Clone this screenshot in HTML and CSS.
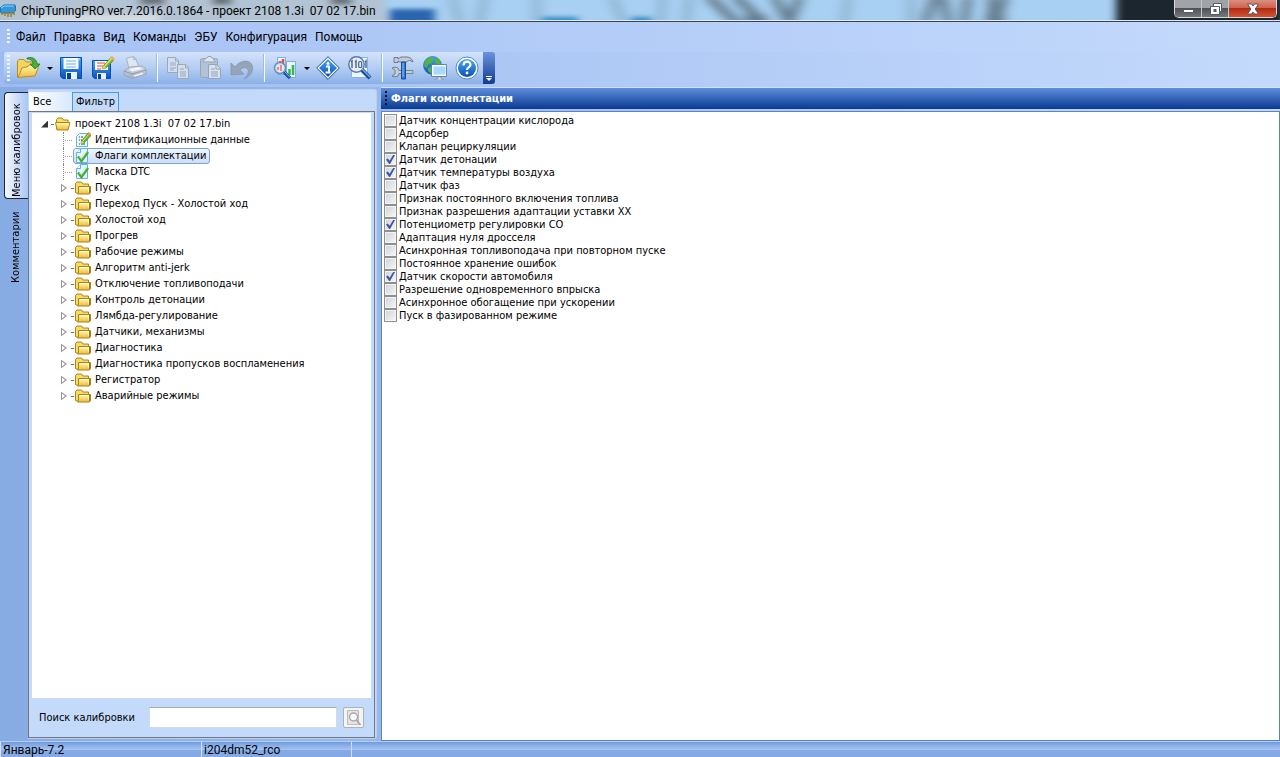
FILE: index.html
```html
<!DOCTYPE html>
<html lang="ru">
<head>
<meta charset="utf-8">
<title>ChipTuningPRO</title>
<link rel="stylesheet" href="styles.css">
</head>
<body>
<svg class="defs" aria-hidden="true">
  <defs>
    <linearGradient id="gold" x1="0" y1="0" x2="0" y2="1"><stop offset="0" stop-color="#fffab8"/><stop offset="1" stop-color="#eebb35"/></linearGradient>
    <linearGradient id="blue" x1="0" y1="0" x2="0" y2="1"><stop offset="0" stop-color="#4ba6ef"/><stop offset="1" stop-color="#0a50bc"/></linearGradient>
    <linearGradient id="grey" x1="0" y1="0" x2="0" y2="1"><stop offset="0" stop-color="#d8e0ea"/><stop offset="1" stop-color="#a3afbf"/></linearGradient>
    <symbol id="folder" viewBox="0 0 16 16">
      <path d="M.5 12.5v-9L2 2h4.500l1.500 2h5.500v9H2z" fill="#f6dc62" stroke="#a8821a"/>
      <path d="M3.500 6.500h12v6l-1 1.500h-12l1-1.500z" fill="url(#gold)" stroke="#a8821a"/>
      <path d="M4.500 7.500h9v4" fill="none" stroke="#fff9c8"/><path d="M14.500 7v6" stroke="#9a7413"/>
    </symbol>
    <symbol id="folder-open" viewBox="0 0 16 16">
      <path d="M1.500 13V3.500L3 2h4l1.500 2H13v9z" fill="#f8df69" stroke="#ab861c"/>
      <path d="M.5 6.500h14.500l-2 7.500H2z" fill="url(#gold)" stroke="#ab861c"/>
    </symbol>
    <symbol id="check" viewBox="0 0 16 16">
      <path d="M5.500.5h7v14h-11v-10z" fill="#e4f4ff" stroke="#63b3e6"/><path d="M1.500 4.500h4v-4" fill="#fff" stroke="#63b3e6"/>
      <path d="M3 8.500l3.500 4.500L13 4" fill="none" stroke="#43a832" stroke-width="2.500"/><path d="M3.500 8.500l3 3L12 4" fill="none" stroke="#8ade65" stroke-width=".8"/>
    </symbol>
    <symbol id="ident" viewBox="0 0 16 16">
      <path d="M4.500 1.500h8v13h-11v-10z" fill="#eef8ff" stroke="#63b3e6"/>
      <path d="M4 5h1m1 0h2M4 8h1m1 0h1M4 12h1m1 0h4" stroke="#245"/>
      <path d="M6 12l1-3.500L13 1l3 2.500L9 11z" fill="#68bc30" stroke="#45801f" stroke-width=".7"/><path d="M12 2l1.500-2L16 2l-1 2z" fill="#e78745"/><path d="M6 12l1-3.500L9 11z" fill="#f3ce65"/><path d="M8 9l5.500-6.500" stroke="#f0df52"/>
    </symbol>
    <symbol id="open" viewBox="0 0 24 24">
      <path d="M1.500 21V5L3 3.500h5L10 6h8v5L5 20z" fill="#f5d45b" stroke="#bd8c21"/>
      <path d="M2 21.500L6 12l6-1.500 1-1.500 10 .5-4 10.500z" fill="url(#gold)" stroke="#bd8c21"/>
      <path d="M11 2c6-2 10 2 10 6h3l-5 5-5-5h3c0-3-2-5-6-5z" fill="#48ae3c" stroke="#217b25" stroke-width=".8"/>
    </symbol>
    <symbol id="save" viewBox="0 0 24 24">
      <path d="M1.500 1.500h21v21H3.500l-2-2z" fill="url(#blue)" stroke="#0752ad"/><path d="M4.500 2h15v11h-15z" fill="#f7fbff"/>
      <path d="M7 5h10M7 8h10M7 11h10" stroke="#70aee5"/><path d="M7 16h11v7H7z" fill="#eaf2fc"/><path d="M8 17h4v6H8z" fill="#064299"/><path d="M20 3h1" stroke="#fff"/>
    </symbol>
    <symbol id="save-as" viewBox="0 0 24 24">
      <path d="M1.500 4.500h18v18H3.500l-2-2z" fill="url(#blue)" stroke="#0752ad"/><path d="M4 5h13v9H4z" fill="#f7fbff"/>
      <path d="M6 7h8m-8 3h6m-6 3h4" stroke="#e54c32"/><path d="M6 17h9v6H6z" fill="#eaf2fc"/><path d="M7 18h3v5H7z" fill="#064299"/>
      <path d="M11 13l2-4L20 1.500 23 4l-8 8z" fill="#78bd32" stroke="#4c8224" stroke-width=".7"/><path d="M19 2l2-2 3 3-2 2z" fill="#e7aa51"/><path d="M11 13l2-4 2 3z" fill="#f5d05d"/><path d="M14 9.500l6.500-7" stroke="#f4e15c" stroke-width="1.300"/>
    </symbol>
    <symbol id="print" viewBox="0 0 24 24">
      <path d="M6 13L3.500 2l7-1.500L13 3l3 9z" fill="#dfe7f1" stroke="#a7b4c4"/><path d="M10.500.5L11 4l2-1" stroke="#a7b4c4" fill="none"/>
      <path d="M1 15l6-4 12-1 4 3v5L9 22.500 1 19z" fill="url(#grey)" stroke="#9aa8b8"/><path d="M1 15l8 3 14-4" fill="none" stroke="#8c9aac"/><path d="M6 13l10-2 3 2-10 2.500z" fill="#f2f6fa"/><path d="M11 20l9-2.500" stroke="#eef3f8" stroke-width="1.500"/>
    </symbol>
    <symbol id="copy" viewBox="0 0 24 24" fill="#d3ddeb" stroke="#98a9bf">
      <path d="M1.500 1.500h8l3 3v12h-11z"/><path d="M9.500 2v3h3M4 7h6m-6 2h6m-6 3h6m-6 2h4" fill="none"/>
      <path d="M11.500 8.500h8l3 3v11h-11z"/><path d="M19.500 9v3h3M14 13h4m-4 3h6m-6 2h6m-6 2h6" fill="none"/>
    </symbol>
    <symbol id="paste" viewBox="0 0 24 24" fill="#b4c2d4" stroke="#94a4b9">
      <rect x="2.500" y="2.500" width="17" height="19" rx="2"/><path d="M6 4l2-2h1l1-1.500h3L14 2h1l2 4H5z" fill="#dde4ed"/>
      <path d="M10.500 8.500h8l4 4v10h-12z" fill="#d8e2ef"/><path d="M18 9v4h4M13 13h4m-4 3h7m-7 2h7m-7 2h7" fill="none"/>
    </symbol>
    <symbol id="undo" viewBox="0 0 24 24"><path d="M1 7v12l13-1-4-4c3-3 7-3 8 0s-1 6-4 9c7-3 10-8 8-14-2-5-11-6-17 2z" fill="#94a4b9" stroke="#8293aa" stroke-width=".7"/></symbol>
    <symbol id="charts" viewBox="0 0 24 24">
      <path d="M4.500 1.500h8v17h-8zM13.500 5.500h9v16h-9z" fill="#edf6ff" stroke="#79aee8"/><path d="M7 9V5m3 4V3" stroke="#f04438" stroke-width="2.500"/><path d="M16.500 19v-6m3.500 6V9" stroke="#34b842" stroke-width="2.500"/>
      <circle cx="7" cy="12" r="5.500" fill="#dceafa" fill-opacity=".88" stroke="#6d8fb5" stroke-width="1.500"/><path d="M5 14v-3m3 4V9" stroke="#ef8a82" stroke-width="2"/><path d="M11 16l6 6" stroke="#205baa" stroke-width="3.500"/><path d="M11 15l6 6" stroke="#72aaf0"/>
    </symbol>
    <symbol id="info" viewBox="0 0 24 24">
      <path d="M12 .7L23.300 12 12 23.300.7 12z" fill="#fff" stroke="#174a91"/><path d="M12 3l9 9-9 9-9-9z" fill="url(#blue)"/><circle cx="12" cy="7.500" r="1.500" fill="#fff"/><path d="M10 10.500h3v6M9.500 16.500h5" fill="none" stroke="#fff" stroke-width="1.800"/>
    </symbol>
    <symbol id="binary" viewBox="0 0 24 24">
      <path d="M3.500 1.500h16v20h-16z" fill="#edf6ff" stroke="#8ab3e3"/><circle cx="8.500" cy="8.500" r="7.700" fill="#e4edf8" stroke="#577ba9" stroke-width="1.400"/>
      <path d="M3 6l1-1v7M7 6l1-1v7M17 6l1-1v7" fill="none" stroke="#4a6388" stroke-width="1.400"/><rect x="10.700" y="5.500" width="3" height="6" rx="1" fill="none" stroke="#4a6388" stroke-width="1.200"/><path d="M14 14l8 8" stroke="#174c99" stroke-width="4"/><path d="M14 13l8 8" stroke="#70aff5" stroke-width="1.300"/>
    </symbol>
    <symbol id="tools" viewBox="0 0 24 24">
      <path d="M3 1.500h4V3l3-2h6c3 0 5 2 6 5-3-2-5-2-6 0H9L7 5v1.500H3z" fill="#c3ccd6" stroke="#596775" stroke-width=".8"/>
      <path d="M1 12l3-1 3 1 1 2.500h14v3H8L7 20l-3 1-3-1 3-2v-4z" fill="#c5cbd2" stroke="#68717b" stroke-width=".8"/><path d="M10.500 6h4v17h-4z" fill="#3178cd" stroke="#174e97"/><path d="M12 7v14" stroke="#8bc0ff"/>
    </symbol>
    <symbol id="globe" viewBox="0 0 24 24">
      <circle cx="9.500" cy="9.500" r="9" fill="url(#blue)" stroke="#226fb7" stroke-width=".7"/><path d="M2 5l5-4 3 2-1 4-4 1-1 4-3-2zM11 2l5 1 2 6-5-1zM5 12l5-2 3 4-3 5-5-4z" fill="#52b53b"/>
      <path d="M9.500 9.500h14v10h-14z" fill="#a9d7ff" stroke="#f6fbff" stroke-width="2"/><path d="M8.500 8.500h15v12h-15z" fill="none" stroke="#477293" stroke-width=".8"/><path d="M15 21h3v2h2v1h-8v-1h3z" fill="#dce5ef" stroke="#617991" stroke-width=".5"/>
    </symbol>
    <symbol id="help" viewBox="0 0 24 24">
      <circle cx="12" cy="12" r="11" fill="#fff" stroke="#4b89ce"/><circle cx="12" cy="12" r="9" fill="url(#blue)"/><path d="M8.500 9.500c0-5 7-5 7-.8 0 2.500-3.500 2.300-3.500 5.300" fill="none" stroke="#fff" stroke-width="2.200"/><circle cx="12" cy="17" r="1.400" fill="#fff"/>
    </symbol>
    <symbol id="search" viewBox="0 0 16 16"><path d="M1.500.5h11v14h-11z" fill="#e4e4e4" stroke="#bbb"/><circle cx="7.500" cy="7" r="4" fill="#f8f8f8" stroke="#aaa" stroke-width="1.500"/><path d="M10.500 10l4 5" stroke="#aaa" stroke-width="2"/></symbol>
    <symbol id="chip" viewBox="0 0 16 16"><path d="M0 5l4-3h11l1 5-3 3H1z" fill="#3198dc" stroke="#1769a8"/><path d="M1 5l3-2h10" fill="none" stroke="#91d7ff"/><path d="M2 9v3m3-3v4m3-4v5m3-5v5m3-6v4" stroke="#a67b28" stroke-width="1.500"/></symbol>
  </defs>
</svg>

<header class="titlebar">
  <svg class="scenery" viewBox="0 0 1280 20" preserveAspectRatio="none" aria-hidden="true">
    <defs><filter id="soft" x="-5%" y="-50%" width="110%" height="200%"><feGaussianBlur stdDeviation="4 2"/></filter><filter id="softer" x="-5%" y="-50%" width="110%" height="200%"><feGaussianBlur stdDeviation="6 3"/></filter></defs>
    <rect width="1280" height="20" fill="#a8d0f2"/>
    <g filter="url(#soft)">
      <path d="M-10-5h395V25H-10z" fill="#b2c3d3"/><path d="M140-4h25v9h-25zM212-4h20V5h-20zM330-4h22V5h-22z" fill="#67727c"/><path d="M30 14h130v10H30z" fill="#d3dbe2"/>
      <path d="M389 9h46v16h-46z" fill="#2c66b0"/>
      <path d="M542 17h36v8h-36zM631 17h20v8h-20z" fill="#338bc5"/>
      <path d="M1116-5h170v30h-170z" fill="#1d262e"/>
    </g>
    <path filter="url(#softer)" d="M452-4l8 28M485-4l-6 28M537-4v28M612-4l12 28M663-4l-3 28M690-4l-4 28M848-4l-4 28M911-4v28" stroke="#6f8ea6" stroke-width="6" opacity=".6"/>
    <path filter="url(#softer)" d="M708-4l30 28M735-4l30 28M800-4l-11 28M774-4l16 28M744 20h24M935-4l-10 28M943-4l5 28M968-4l-4 28M1005-4l-10 28M992-4v28M985 20h20" stroke="#4d5f6c" stroke-width="9" opacity=".75"/>
  </svg>
  <svg class="app-icon"><use href="#chip"/></svg>
  <span class="title">ChipTuningPRO ver.7.2016.0.1864 - проект 2108 1.3i&nbsp; 07 02 17.bin</span>
  <div class="window-buttons">
    <button class="wb" aria-label="Свернуть"><svg viewBox="0 0 14 12"><path d="M2.500 6.500h10v3h-10z" fill="#fff" stroke="#555a67"/></svg></button>
    <button class="wb" aria-label="Восстановить"><svg viewBox="0 0 14 12"><path d="M5.500.5h8v8h-2v3h-9v-8h3z" fill="#fff" stroke="#555a67"/><path d="M5.500 6h3v3h-3z" fill="#555a67"/><path d="M5.500 3.500h6v5" fill="none" stroke="#555a67"/></svg></button>
    <button class="wb wb-close" aria-label="Закрыть"><svg viewBox="0 0 14 12"><path d="M1.500 1h4L7 3l1.500-2h4L9.200 6l3.300 5h-4L7 9l-1.500 2h-4l3.300-5z" fill="#fff" stroke="#555a67"/></svg></button>
  </div>
</header>

<nav class="menubar">
  <i class="grip"></i>
  <button>Файл</button><button>Правка</button><button>Вид</button><button>Команды</button><button>ЭБУ</button><button>Конфигурация</button><button>Помощь</button>
</nav>

<div class="toolbar-row">
  <div class="toolbar" role="toolbar">
    <i class="grip grip-tall"></i>
    <button class="tool" aria-label="Открыть"><svg><use href="#open"/></svg></button><button class="drop" aria-label="Недавние файлы"></button>
    <button class="tool" aria-label="Сохранить"><svg><use href="#save"/></svg></button>
    <button class="tool" aria-label="Сохранить как"><svg><use href="#save-as"/></svg></button>
    <button class="tool" aria-label="Печать" disabled><svg><use href="#print"/></svg></button>
    <i class="sep"></i>
    <button class="tool" aria-label="Копировать" disabled><svg><use href="#copy"/></svg></button>
    <button class="tool" aria-label="Вставить" disabled><svg><use href="#paste"/></svg></button>
    <button class="tool" aria-label="Отменить" disabled><svg><use href="#undo"/></svg></button>
    <i class="sep"></i>
    <button class="tool" aria-label="Графики"><svg><use href="#charts"/></svg></button><button class="drop" aria-label="Виды графиков"></button>
    <button class="tool" aria-label="Информация"><svg><use href="#info"/></svg></button>
    <button class="tool" aria-label="Просмотр кода"><svg><use href="#binary"/></svg></button>
    <i class="sep"></i>
    <button class="tool" aria-label="Настройки"><svg><use href="#tools"/></svg></button>
    <button class="tool" aria-label="Обновление"><svg><use href="#globe"/></svg></button>
    <button class="tool" aria-label="Справка"><svg><use href="#help"/></svg></button>
    <button class="overflow" aria-label="Параметры панели"></button>
  </div>
</div>

<main class="workspace">
  <div class="side-tabs">
    <button class="side-tab side-tab-active">Меню калибровок</button>
    <button class="side-tab">Комментарии</button>
  </div>
  <section class="left">
    <div class="tabs"><button class="tab tab-active">Все</button><button class="tab">Фильтр</button></div>
    <div class="left-body">
      <div class="tree">
        <div class="node"><button class="twisty twisty-open" aria-label="Свернуть"></button><i class="dots"></i><button class="label"><svg><use href="#folder-open"/></svg>проект 2108 1.3i&nbsp; 07 02 17.bin</button></div>
        <ul class="children">
          <li class="node leaf"><i class="branch"></i><button class="label"><svg><use href="#ident"/></svg>Идентификационные данные</button></li>
          <li class="node leaf"><i class="branch"></i><button class="label label-selected"><svg><use href="#check"/></svg>Флаги комплектации</button></li>
          <li class="node leaf"><i class="branch"></i><button class="label"><svg><use href="#check"/></svg>Маска DTC</button></li>
          <li class="node"><button class="twisty" aria-label="Развернуть"></button><i class="dots"></i><button class="label"><svg><use href="#folder"/></svg>Пуск</button></li>
          <li class="node"><button class="twisty" aria-label="Развернуть"></button><i class="dots"></i><button class="label"><svg><use href="#folder"/></svg>Переход Пуск - Холостой ход</button></li>
          <li class="node"><button class="twisty" aria-label="Развернуть"></button><i class="dots"></i><button class="label"><svg><use href="#folder"/></svg>Холостой ход</button></li>
          <li class="node"><button class="twisty" aria-label="Развернуть"></button><i class="dots"></i><button class="label"><svg><use href="#folder"/></svg>Прогрев</button></li>
          <li class="node"><button class="twisty" aria-label="Развернуть"></button><i class="dots"></i><button class="label"><svg><use href="#folder"/></svg>Рабочие режимы</button></li>
          <li class="node"><button class="twisty" aria-label="Развернуть"></button><i class="dots"></i><button class="label"><svg><use href="#folder"/></svg>Алгоритм anti-jerk</button></li>
          <li class="node"><button class="twisty" aria-label="Развернуть"></button><i class="dots"></i><button class="label"><svg><use href="#folder"/></svg>Отключение топливоподачи</button></li>
          <li class="node"><button class="twisty" aria-label="Развернуть"></button><i class="dots"></i><button class="label"><svg><use href="#folder"/></svg>Контроль детонации</button></li>
          <li class="node"><button class="twisty" aria-label="Развернуть"></button><i class="dots"></i><button class="label"><svg><use href="#folder"/></svg>Лямбда-регулирование</button></li>
          <li class="node"><button class="twisty" aria-label="Развернуть"></button><i class="dots"></i><button class="label"><svg><use href="#folder"/></svg>Датчики, механизмы</button></li>
          <li class="node"><button class="twisty" aria-label="Развернуть"></button><i class="dots"></i><button class="label"><svg><use href="#folder"/></svg>Диагностика</button></li>
          <li class="node"><button class="twisty" aria-label="Развернуть"></button><i class="dots"></i><button class="label"><svg><use href="#folder"/></svg>Диагностика пропусков воспламенения</button></li>
          <li class="node"><button class="twisty" aria-label="Развернуть"></button><i class="dots"></i><button class="label"><svg><use href="#folder"/></svg>Регистратор</button></li>
          <li class="node"><button class="twisty" aria-label="Развернуть"></button><i class="dots"></i><button class="label"><svg><use href="#folder"/></svg>Аварийные режимы</button></li>
        </ul>
      </div>
      <form class="search">
        <label for="q">Поиск калибровки</label>
        <input id="q" type="text">
        <button type="button" class="search-btn" aria-label="Найти"><svg><use href="#search"/></svg></button>
      </form>
    </div>
  </section>
  <section class="right">
    <h1 class="caption"><i class="grip grip-dark"></i>Флаги комплектации</h1>
    <div class="flags">
      <label class="flag"><input type="checkbox">Датчик концентрации кислорода</label>
      <label class="flag"><input type="checkbox">Адсорбер</label>
      <label class="flag"><input type="checkbox">Клапан рециркуляции</label>
      <label class="flag"><input type="checkbox" checked>Датчик детонации</label>
      <label class="flag"><input type="checkbox" checked>Датчик температуры воздуха</label>
      <label class="flag"><input type="checkbox">Датчик фаз</label>
      <label class="flag"><input type="checkbox">Признак постоянного включения топлива</label>
      <label class="flag"><input type="checkbox">Признак разрешения адаптации уставки ХХ</label>
      <label class="flag"><input type="checkbox" checked>Потенциометр регулировки СО</label>
      <label class="flag"><input type="checkbox">Адаптация нуля дросселя</label>
      <label class="flag"><input type="checkbox">Асинхронная топливоподача при повторном пуске</label>
      <label class="flag"><input type="checkbox">Постоянное хранение ошибок</label>
      <label class="flag"><input type="checkbox" checked>Датчик скорости автомобиля</label>
      <label class="flag"><input type="checkbox">Разрешение одновременного впрыска</label>
      <label class="flag"><input type="checkbox">Асинхронное обогащение при ускорении</label>
      <label class="flag"><input type="checkbox">Пуск в фазированном режиме</label>
    </div>
  </section>
</main>

<footer class="status"><span class="cell cell-a">Январь-7.2</span><span class="cell cell-b">i204dm52_rco</span><span class="cell cell-c"></span></footer>
</body>
</html>
```
FILE: styles.css
```css
* { box-sizing: border-box; }
body {
  margin: 0;
  height: 100vh;
  display: flex;
  flex-direction: column;
  overflow: hidden;
  background: linear-gradient(90deg, #87abe3, #c4dafc);
  color: #000;
  font: 11px/16px "DejaVu Sans Condensed", "DejaVu Sans", sans-serif;
}
button { border: 0; padding: 0; margin: 0; background: none; font: inherit; color: inherit; }
svg { display: block; flex: none; }
.defs { position: absolute; width: 0; height: 0; }

/* Title bar */
.titlebar {
  position: relative;
  flex: none;
  height: 22px;
  display: flex;
  align-items: center;
  border-bottom: 1px solid #3b4350;
  box-shadow: inset 0 -1px #dfeaf5;
  overflow: hidden;
  font: 12px/18px Roboto, "Noto Sans", sans-serif;
}
.scenery { position: absolute; inset: 0 0 1px; width: 100%; height: 20px; }
.app-icon { position: relative; width: 16px; height: 16px; }
.title { position: relative; margin-left: 5px; white-space: pre; }
.window-buttons {
  position: relative;
  display: flex;
  align-self: flex-start;
  height: 18px;
  margin: 0 3px 0 auto;
  border: 1px solid #d6d8da;
  border-top: 0;
  border-radius: 0 0 5px 5px;
  overflow: hidden;
}
.wb {
  width: 27px;
  display: flex;
  justify-content: center;
  align-items: center;
  border-right: 1px solid #c4c6c8;
  background: linear-gradient(#a0a3a7 0 45%, #4f5359 50%, #74777c);
}
.wb svg { width: 14px; height: 12px; }
.wb-close { width: 47px; border-right: 0; background: linear-gradient(#d99081, #cf6150 45%, #b22c14 50%, #d35330); }

/* Menu */
.menubar {
  flex: none;
  height: 30px;
  display: flex;
  align-items: center;
  padding-left: 7px;
  background: linear-gradient(90deg, #a5c1f4, #c4dafc);
  font: 12px/18px Roboto, "Noto Sans", sans-serif;
}
.menubar button { padding: 0 4px; }
.grip {
  flex: none;
  width: 3px;
  height: 16px;
  margin-right: 2px;
  background: repeating-linear-gradient(#eef4ff 0 2px, transparent 2px 4px);
}
.grip-tall { height: 26px; margin: 0 2px 0 3px; }
.grip-dark { height: 15px; width: 2px; margin: 0 4px 0 4px; background: repeating-linear-gradient(#04102e 0 2px, transparent 2px 4px); }

/* Toolbar */
.toolbar-row { flex: none; padding: 0 4px 3px; background: linear-gradient(90deg, #9dbbf0, #c4dafc); }
.toolbar {
  width: max-content;
  height: 32px;
  display: flex;
  align-items: center;
  border-radius: 3px;
  background: linear-gradient(#d3e3fb, #b4cdf3 50%, #8bb0e6);
}
.tool { width: 32px; height: 32px; display: flex; align-items: center; justify-content: center; }
.tool svg { width: 24px; height: 24px; }
.drop { width: 11px; height: 32px; display: flex; align-items: center; justify-content: center; }
.drop::before { content: ""; border: 3px solid transparent; border-top-color: #000; border-bottom: 0; }
.sep { width: 11px; height: 28px; display: flex; justify-content: center; }
.sep::before { content: ""; width: 2px; background: linear-gradient(90deg, #9dbbe6 50%, #f8fbff 50%); }
.overflow {
  width: 12px;
  align-self: stretch;
  display: flex;
  flex-direction: column;
  align-items: center;
  justify-content: flex-end;
  gap: 1px;
  padding-bottom: 3px;
  border-radius: 0 3px 3px 0;
  background: linear-gradient(#6a93dd, #123c91);
}
.overflow::before { content: ""; width: 6px; height: 1px; background: #fff; }
.overflow::after { content: ""; border: 3px solid transparent; border-top-color: #fff; border-bottom: 0; }

/* Workspace */
.workspace { flex: 1; min-height: 0; display: flex; }
.side-tabs { width: 28px; flex: none; display: flex; flex-direction: column; align-items: flex-end; padding-top: 5px; }
.side-tab {
  width: 24px;
  height: 85px;
  padding-top: 1px;
  writing-mode: vertical-rl;
  transform: rotate(180deg);
  text-align: start;
}
.side-tab-active {
  height: 107px;
  border: 1px solid #1d2634;
  border-left: 0;
  border-radius: 0 4px 4px 0;
  background: linear-gradient(90deg, #a9c6f5, #f4f8fe);
}
.left {
  width: 349px;
  flex: none;
  display: flex;
  flex-direction: column;
  margin: 2px 0 2px;
  border: 1px solid #b9d0f5;
  border-left: 0;
  border-radius: 0 3px 3px 0;
  background: #c4dafa;
}
.tabs { display: flex; align-items: flex-end; height: 21px; flex: none; padding: 2px 0 0 1px; }
.tab { height: 19px; padding: 0 3px; border: 1px solid #3d9df0; border-bottom: 0; text-align: left; }
.tab-active { width: 43px; border: 0; padding-left: 4px; background: linear-gradient(90deg, #fff, #d9e8fc); }
.left-body {
  flex: 1;
  min-height: 0;
  display: flex;
  flex-direction: column;
  margin-right: 1px;
  border: 1px solid #75777b;
  padding: 1px 3px 0;
}
.tree { flex: 1; min-height: 0; background: #fff; padding: 3px 0 0 9px; }
.node { display: flex; align-items: center; height: 16px; }
.children { list-style: none; margin: 0; padding: 0 0 0 20px; }
.twisty { width: 7px; height: 9px; margin-right: 3px; background: #999; clip-path: polygon(0 0, 6px 50%, 0 100%, 0 7px, 1px 7px, 4px 50%, 1px 2px, 1px 7px, 0 7px); }
.twisty-open { height: 7px; background: #333; clip-path: polygon(100% 0, 100% 100%, 0 100%); }
.dots { width: 2px; border-top: 1px dotted #777; }
.branch { align-self: stretch; width: 10px; margin-left: 2px; border-left: 1px dotted #888; background: repeating-linear-gradient(90deg, transparent 0 1px, #999 1px 2px) 0 50% / 100% 1px no-repeat; }
.label {
  display: flex;
  align-items: center;
  gap: 4px;
  height: 16px;
  padding: 0 3px 0 1px;
  border: 1px solid transparent;
  border-radius: 3px;
  white-space: pre;
}
.label svg { width: 16px; height: 16px; }
.label-selected { border-color: #7da2ce; background: linear-gradient(#eff5fd, #cadef9); }
.search { flex: none; height: 39px; display: flex; align-items: center; padding: 0 7px; }
.search label { width: 110px; }
.search input { flex: 1; min-width: 0; height: 21px; border: 1px solid #d0dbe8; border-top-color: #abadb3; background: #fff; font: inherit; }
.search-btn { width: 21px; height: 21px; margin-left: 6px; display: flex; align-items: center; justify-content: center; border: 1px solid #adb2b5; border-radius: 2px; background: #f4f4f4; }
.search-btn svg { width: 16px; height: 16px; }

.right { flex: 1; min-width: 0; display: flex; flex-direction: column; margin-left: 4px; }
.caption {
  flex: none;
  height: 22px;
  display: flex;
  align-items: center;
  margin: 0 0 2px;
  border-top: 1px solid #cfe0fb;
  background: linear-gradient(#5e8edb, #0a3a92);
  color: #fff;
  font: bold 11px/16px "DejaVu Sans Condensed", "DejaVu Sans", sans-serif;
}
.flags {
  flex: 1;
  min-height: 0;
  padding: 2px;
  border: 1px solid #5d83be;
  background: #fff;
}
.flag { display: flex; align-items: center; width: max-content; height: 13px; line-height: 13px; gap: 2px; }
.flag input {
  appearance: none;
  flex: none;
  width: 13px;
  height: 13px;
  margin: 0;
  border: 1px solid #8e8f8f;
  background: linear-gradient(135deg, #cfd3d8, #f6f6f6);
  box-shadow: inset 0 0 0 1px #f4f4f4;
}
.flag input:checked::after {
  content: "";
  display: block;
  width: 9px;
  height: 9px;
  margin: 1px;
  background: #3b57a0;
  clip-path: polygon(0 50%, 20% 40%, 40% 65%, 80% 0, 100% 0, 45% 100%, 35% 100%);
}

/* Status bar */
.status {
  flex: none;
  height: 16px;
  display: flex;
  border-top: 1px solid #b4cdf4;
  background: linear-gradient(#6f9be0, #a5c4f0 50%, #84a9e4 55%, #84a9e4);
  font: 12px/17px Roboto, "Noto Sans", sans-serif;
}
.cell { border-left: 1px solid #cfe0fb; padding-left: 2px; }
.cell-a { width: 201px; }
.cell-b { width: 150px; }
.cell-c { flex: 1; }
```
